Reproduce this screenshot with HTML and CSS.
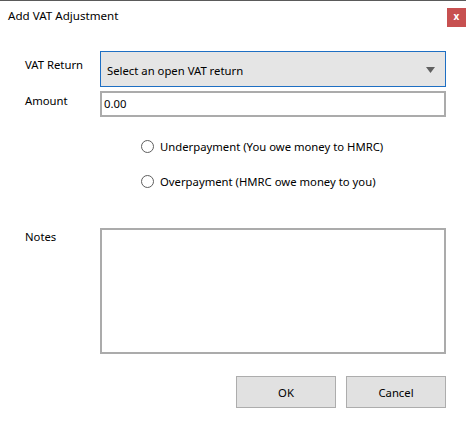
FILE: index.html
```html
<!DOCTYPE html>
<html>
<head>
<meta charset="utf-8">
<link rel="stylesheet" href="styles.css">
</head>
<body>
<div class="window">
  <div class="titlebar">
    <span class="title">Add VAT Adjustment</span>
    <span class="close">x</span>
  </div>
  <div class="form">
    <div class="row row-vat">
      <div class="label">VAT Return</div>
      <div class="combo">
        <span class="combo-text">Select an open VAT return</span>
        <svg class="arrow" width="9" height="6" viewBox="0 0 9 6"><path d="M0 0 L9 0 L4.5 6 Z" fill="#606060"/></svg>
      </div>
    </div>
    <div class="row row-amount">
      <div class="label">Amount</div>
      <div class="textbox">0.00</div>
    </div>
    <div class="radios">
      <div class="radio"><span class="circle"></span><span>Underpayment (You owe money to HMRC)</span></div>
      <div class="radio"><span class="circle"></span><span>Overpayment (HMRC owe money to you)</span></div>
    </div>
    <div class="row row-notes">
      <div class="label">Notes</div>
      <div class="notes"></div>
    </div>
    <div class="buttons">
      <div class="btn">OK</div>
      <div class="btn">Cancel</div>
    </div>
  </div>
</div>
</body>
</html>
```

FILE: styles.css
```css
html, body {
  margin: 0;
  padding: 0;
  background: #ffffff;
}
body {
  font-family: "Noto Sans", "Open Sans", sans-serif;
  font-size: 11.3px;
  color: #000;
}
.window {
  width: 466px;
  height: 425px;
  border-top: 1px solid #5a5a5a;
  box-sizing: border-box;
}
.titlebar {
  height: 50px;
  display: flex;
  align-items: flex-start;
  justify-content: space-between;
}
.title {
  margin-left: 8px;
  margin-top: 6px;
  line-height: 18px;
  font-size: 11.6px;
}
.close {
  margin-top: 7px;
  width: 19px;
  height: 19px;
  background: #c75050;
  color: #fff;
  font-weight: bold;
  font-size: 10px;
  line-height: 17px;
  text-align: center;
}
.form {
  display: flex;
  flex-direction: column;
  padding-right: 20px;
}
.row {
  display: flex;
}
.label {
  width: 75px;
  padding-left: 25px;
  line-height: 16px;
}
.row-vat .label { padding-top: 6px; }
.combo {
  flex: 1;
  height: 36px;
  box-sizing: border-box;
  border: 1px solid #1e6fc3;
  background: #e5e5e5;
  display: flex;
  align-items: center;
  justify-content: space-between;
  padding: 2px 10px 0 6px;
}
.row-amount {
  margin-top: 4px;
}
.row-amount .label { padding-top: 2px; }
.textbox {
  flex: 1;
  height: 26px;
  box-sizing: border-box;
  border: 2px solid #ababab;
  padding-left: 2px;
  line-height: 21px;
}
.radios {
  margin-top: 20px;
  padding-left: 141px;
  display: flex;
  flex-direction: column;
  gap: 17px;
}
.radio {
  display: flex;
  align-items: center;
  height: 18px;
}
.circle {
  width: 11px;
  height: 11px;
  border: 1px solid #5e5e5e;
  border-radius: 50%;
  margin-right: 6px;
  box-sizing: content-box;
}
.row-notes {
  margin-top: 38px;
}
.row-notes .label { padding-top: 1px; }
.notes {
  flex: 1;
  height: 126px;
  box-sizing: border-box;
  border: 2px solid #ababab;
}
.buttons {
  margin-top: 22px;
  display: flex;
  justify-content: flex-end;
  gap: 10px;
}
.btn {
  width: 100px;
  height: 32px;
  box-sizing: border-box;
  border: 1px solid #adadad;
  background: #e1e1e1;
  display: flex;
  align-items: center;
  justify-content: center;
}
```
